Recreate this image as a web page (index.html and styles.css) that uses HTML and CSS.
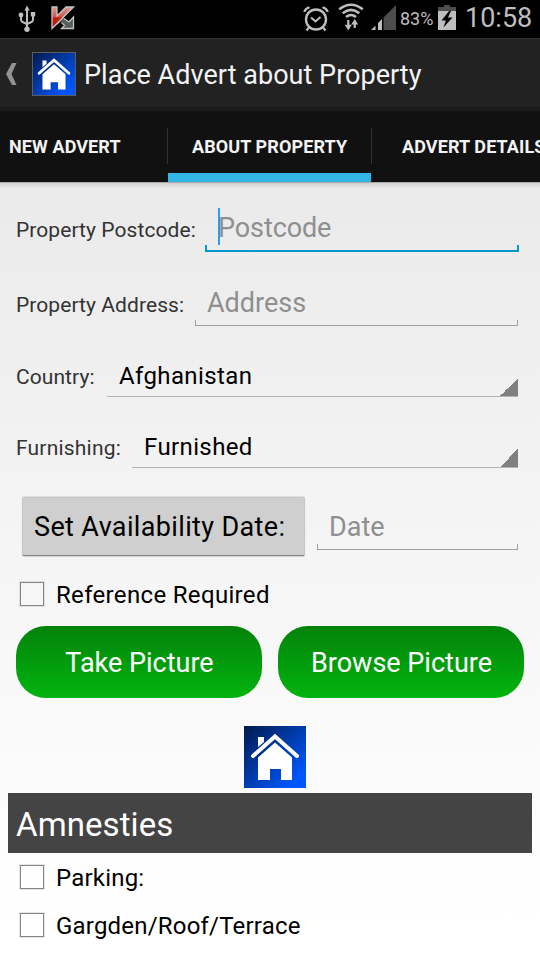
FILE: index.html
```
<!DOCTYPE html>
<html lang="en">
<head>
<meta charset="utf-8">
<title>Place Advert about Property</title>
<link rel="stylesheet" href="styles.css">
</head>
<body>
<svg class="defs" width="0" height="0">
  <defs>
    <linearGradient id="blue" x1="0" y1="0" x2="1" y2="1">
      <stop offset="0" stop-color="#001a4e"/><stop offset=".5" stop-color="#003db0"/><stop offset=".85" stop-color="#0055fa"/><stop offset="1" stop-color="#0058ff"/>
    </linearGradient>
    <linearGradient id="red" x1="0" y1="0" x2="0" y2="1">
      <stop offset="0" stop-color="#dc9a92"/><stop offset=".45" stop-color="#cc5a4c"/><stop offset=".5" stop-color="#bd1c08"/><stop offset="1" stop-color="#b81a08"/>
    </linearGradient>
    <symbol id="house" viewBox="0 0 62 62">
      <rect width="62" height="62" fill="url(#blue)"/>
      <path d="M14 11h6v5l-6 5z" fill="#fff"/>
      <path d="M9 30L31 10.500L53 30" fill="none" stroke="#fff" stroke-width="4" stroke-linecap="round"/>
      <path d="M31 16.500L48 31.500V54H37V43H26V54H14V31.500z" fill="#fff"/>
    </symbol>
  </defs>
</svg>
<div class="status">
  <svg class="usb" width="18" height="28" viewBox="0 0 18 28" fill="none" stroke="#bebebe" stroke-width="2">
    <path d="M9 5v19M3 11v3.500q0 2 2 2.800l4 1.700M15 11v3.500q0 2-2 2.800l-4 1.700"/>
    <path d="M9 .5l2.600 5H6.400z" fill="#bebebe" stroke="none"/>
    <circle cx="3" cy="10" r="2.400" fill="#bebebe" stroke="none"/><rect x="12.800" y="7" width="4.400" height="4.400" fill="#bebebe" stroke="none"/><circle cx="9" cy="24.300" r="2.700" fill="#bebebe" stroke="none"/>
  </svg>
  <svg class="kav" width="24" height="24" viewBox="0 0 24 24">
    <path d="M1 1h5v9L15 1h7.500L12.500 11.500l5 4.500 5-5v11.500H10.500l3-3-3-4L1 22.500z" fill="#555d5f"/>
    <path d="M1 1h5v9L15 1h7.500L1 22.500z" fill="url(#red)"/>
    <path d="M1 22.500V1h5v9L15 1h7.500zM13 12.500l5 3.500 4.500-5v11.500H10.500l3-3-3-3" fill="none" stroke="#c4c4c4" stroke-width="1.300"/>
  </svg>
  <span class="grow"></span>
  <svg class="alarm" width="26" height="26" viewBox="0 0 26 26" fill="none" stroke="#bebebe">
    <circle cx="13" cy="13.500" r="10" stroke-width="2.400"/>
    <path d="M8 11.500l4.500 4 5-4.500" stroke-width="2"/>
    <path d="M1.200 6Q2.500 2.200 6.500 1.300M24.800 6Q23.500 2.200 19.500 1.300M6 21.500l-2.500 3M20 21.500l2.500 3" stroke-width="2.200"/>
  </svg>
  <svg class="wifi" width="26" height="28" viewBox="0 0 26 28" fill="none" stroke="#bebebe" stroke-width="2.600">
    <path d="M1.200 6.300Q13-2.800 24.800 6.300M4.700 10.200Q13 3.600 21.300 10.200M8 14Q13 10 18 14"/>
    <path d="M10.300 17v6M16.700 25v-6" stroke-width="2.200"/>
    <path d="M6.800 21.800h7L10.300 27.500zM13.200 21.500h7L16.700 16z" fill="#bebebe" stroke="none"/>
  </svg>
  <svg class="signal" width="26" height="26" viewBox="0 0 26 26">
    <path d="M12.500 25V12.500L25 0v25z" fill="#4d4d4d"/>
    <path d="M0 25l4.500-4.500V25zM7 25v-7l4-4v11z" fill="#bebebe"/>
  </svg>
  <span class="percent">83%</span>
  <svg class="battery" width="18" height="25" viewBox="0 0 18 25">
    <path d="M6 0h6v2h6v4H0V2h6z" fill="#4d4d4d"/><path d="M0 6h18v19H0z" fill="#bebebe"/>
    <path d="M11 6L3.500 15.500h4.300L5.500 22.500 14.500 12.500H10L13 6z" fill="#000"/>
  </svg>
  <span class="clock">10:58</span>
</div>
<header class="bar">
  <svg class="back" width="12" height="22" viewBox="0 0 12 22"><path d="M6 0h4.500L5.500 11l5 11H6L0 11z" fill="#929292"/></svg>
  <span class="logo"><svg width="42" height="42"><use href="#house"/></svg></span>
  <h1><span>Place Advert about Property</span></h1>
</header>
<nav class="tabs">
  <div class="tab first"><span>NEW ADVERT</span></div>
  <div class="tab active"><span>ABOUT PROPERTY</span></div>
  <div class="tab last"><span>ADVERT DETAILS</span></div>
</nav>
<main>
  <div class="row postcode"><label>Property Postcode:</label><div class="field focus"><span>Postcode</span></div></div>
  <div class="row address"><label>Property Address:</label><div class="field"><span>Address</span></div></div>
  <div class="row country"><label>Country:</label><div class="spinner"><span>Afghanistan</span></div></div>
  <div class="row furnishing"><label>Furnishing:</label><div class="spinner"><span>Furnished</span></div></div>
  <div class="row date"><button class="set"><span>Set Availability Date:</span></button><div class="field"><span>Date</span></div></div>
  <div class="check reference"><i></i><span>Reference Required</span></div>
  <div class="pictures"><button class="take"><span>Take Picture</span></button><button class="browse"><span>Browse Picture</span></button></div>
  <svg class="photo" width="62" height="62"><use href="#house"/></svg>
  <h2><span>Amnesties</span></h2>
  <div class="check parking"><i></i><span>Parking:</span></div>
  <div class="check garden"><i></i><span>Gargden/Roof/Terrace</span></div>
</main>
</body>
</html>
```
FILE: styles.css
```
* { box-sizing: border-box; }
body { margin: 0; width: 540px; height: 960px; overflow: hidden; font-family: Roboto, sans-serif; color: #000; background: #fff; white-space: nowrap; }
.defs { position: absolute; }
svg { display: block; flex: none; }

.status { display: flex; height: 38px; background: #000; color: #bebebe; }
.usb { margin: 5px 0 0 18px; }
.kav { margin: 6px 0 0 15px; }
.grow { flex: 1; }
.alarm { margin: 6px 9px 0 0; }
.wifi { margin: 3px 7px 0 0; }
.signal { margin: 5px 3px 0 0; }
.percent { flex: none; width: 38px; font-size: 18px; line-height: 38px; }
.battery { margin-top: 5px; }
.clock { flex: none; width: 84px; padding-left: 9px; font-size: 27px; line-height: 37px; }

.bar { display: flex; height: 73px; align-items: center; border-top: 1px solid #333; border-bottom: 4px solid #1b1b1b; background: #222; padding: 2px 0 0 6px; }
.back { margin-top: 0; }
.logo { margin: 0 0 0 14px; border: 1px solid #5d5d5d; }
h1 { margin: 2px 0 0 8px; font-size: 27px; font-weight: 400; letter-spacing: .03px; color: #f3f3f3; }

.tabs { display: flex; height: 71px; background: #111; color: #f3f3f3; font-size: 18px; font-weight: 700; line-height: 71px; letter-spacing: .1px; }
.tab { flex: none; }
.first { width: 167px; padding-left: 9px; }
.active { width: 204px; padding-left: 25px; background: linear-gradient(#333, #333) 0 17px / 1px 36px no-repeat, linear-gradient(#33b5e5, #33b5e5) 1px 100% / 203px 9px no-repeat; }
.last { width: 169px; padding-left: 31px; overflow: hidden; background: linear-gradient(#333, #333) 0 17px / 1px 36px no-repeat; }

main { height: 778px; padding-top: 22px; background: linear-gradient(#a8a8a8 0, #a8a8a8 1px, transparent 1px), linear-gradient(rgba(0,0,0,.12), transparent 7px), linear-gradient(#eaeaea, #f3f3f3 38%, #fff 95%); }
.row { display: flex; height: 48px; padding: 0 22px 0 16px; margin-bottom: 23px; }
.postcode { margin-bottom: 26px; padding-right: 21px; }
label { font-size: 21px; line-height: 52px; letter-spacing: .07px; color: #333; flex: none; }
.postcode label { width: 189px; }
.address label { width: 179px; line-height: 54px; }
.country label { width: 91px; line-height: 56px; }
.furnishing label { width: 116px; line-height: 56px; letter-spacing: .2px; }
.field { flex: 1; padding-left: 12px; font-size: 27px; line-height: 51px; color: #8f8f8f; background: linear-gradient(#a0a0a0, #a0a0a0) 0 100% / 1px 5px no-repeat, linear-gradient(#a0a0a0, #a0a0a0) 100% 100% / 1px 5px no-repeat; border-bottom: 1px solid #a0a0a0; }
.focus { padding-left: 13px; line-height: 49px; letter-spacing: -.1px; border-bottom: 2px solid #0099cc; background: linear-gradient(#0099cc, #0099cc) 0 100% / 2px 5px no-repeat, linear-gradient(#0099cc, #0099cc) 100% 100% / 2px 5px no-repeat, linear-gradient(#2a9df4, #2a9df4) 13px 4px / 2px 37px no-repeat; }
.spinner { flex: 1; padding-left: 12px; font-size: 24px; line-height: 54px; letter-spacing: .38px; border-bottom: 1px solid #b4b4b4; background: linear-gradient(135deg, transparent 50%, #808080 50%) 100% 100% / 18px 18px no-repeat; }
.furnishing { margin-bottom: 29px; }
.date { height: 59px; padding-left: 22px; margin-bottom: 19px; }
.date .field { flex: 1; height: 53px; margin-left: 12px; line-height: 60px; }
button { font-family: inherit; font-size: 27px; border: 0; padding: 0; }
.set { width: 283px; background: #cfcfcf; border: 1px solid #c6c6c6; border-bottom-color: #858585; border-radius: 2px; box-shadow: 0 1px 1px rgba(0,0,0,.15), 0 -1px 0 rgba(0,0,0,.08); text-align: left; padding-left: 11px; letter-spacing: .36px; color: #000; }
.check { display: flex; height: 38px; padding-left: 20px; align-items: center; font-size: 24px; letter-spacing: .33px; }
.check i { width: 24px; height: 24px; border: 1px solid #858585; margin-right: 12px; outline: 1px solid rgba(120,120,120,.18); outline-offset: 0; }
.check span { padding-top: 2px; }
.pictures { display: flex; gap: 16px; padding: 0 16px; margin-top: 13px; }
.pictures button { width: 246px; height: 72px; padding: 2px 0 0 1px; border-radius: 30px; background: linear-gradient(#03820b, #02b40e); color: #fff; }
.photo { margin: 28px auto 5px 244px; }
h2 { margin: 0 8px 5px; height: 60px; padding-left: 8px; background: #444; color: #fff; font-size: 33px; font-weight: 400; line-height: 63px; letter-spacing: .1px; }
.parking, .garden { letter-spacing: .2px; }
.garden { margin-top: 10px; }
```
